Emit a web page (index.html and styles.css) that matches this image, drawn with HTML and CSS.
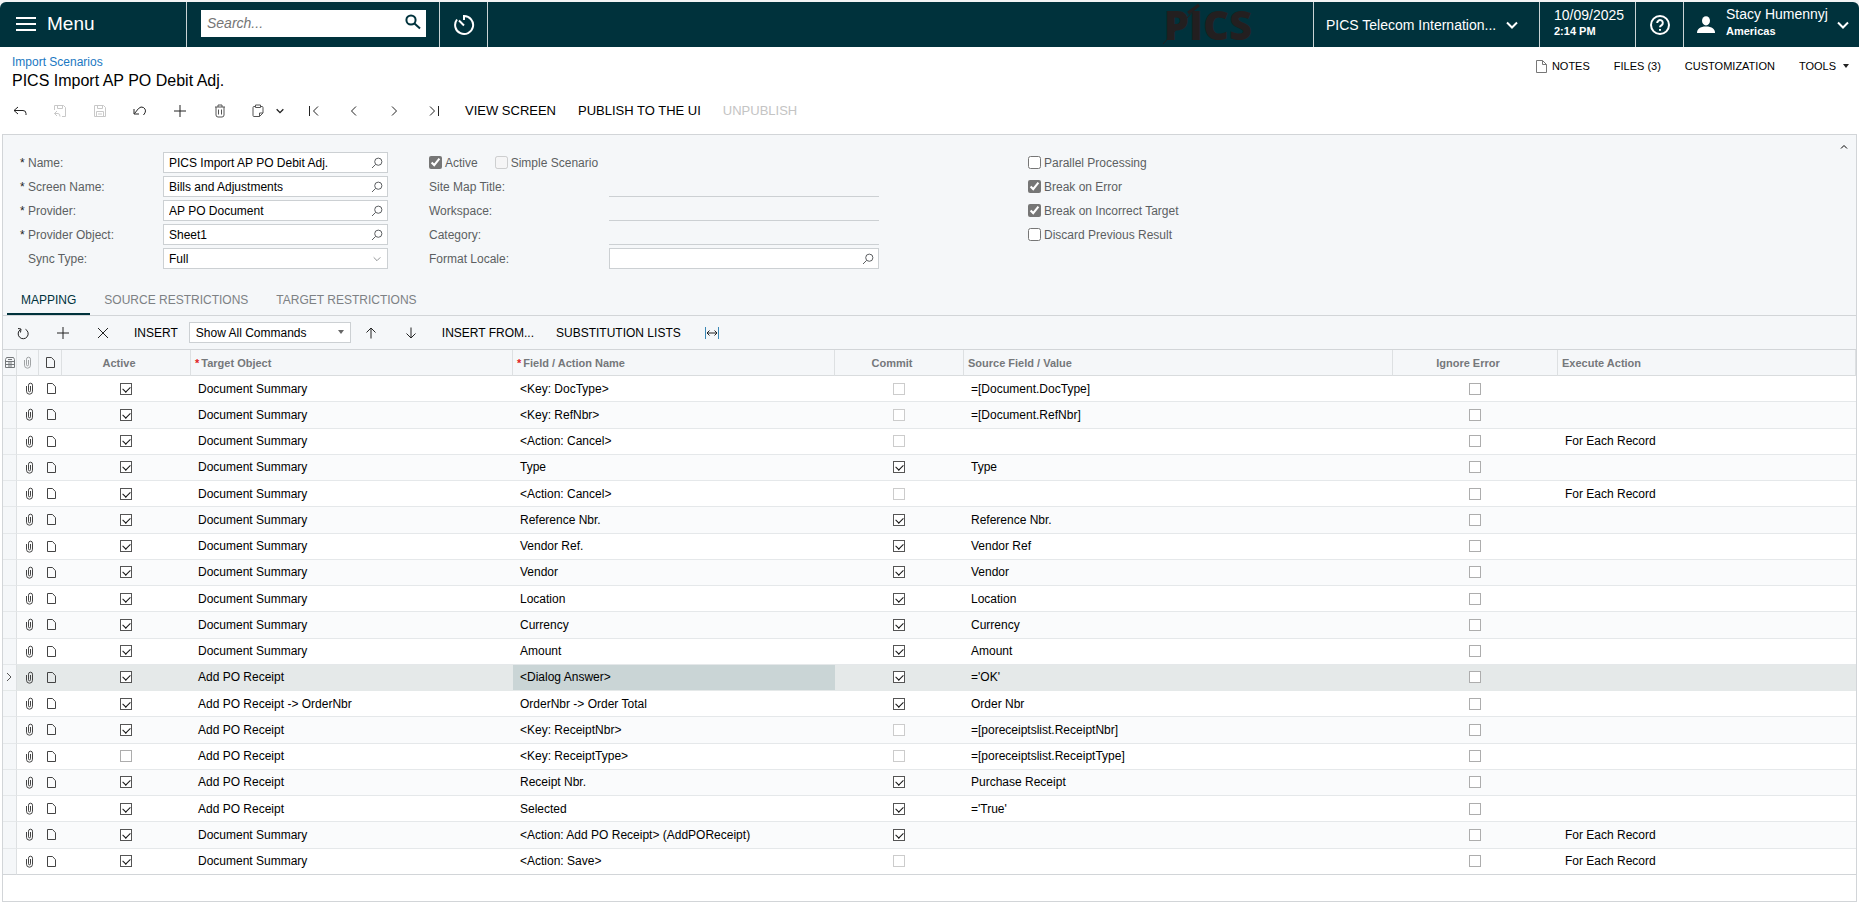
FILE: index.html
```html
<!DOCTYPE html>
<html lang="en">
<head>
  <meta charset="UTF-8">
  <title>Import Scenarios</title>
  <link rel="stylesheet" href="styles.css">
</head>
<body>

  <!-- shared icons -->
  <svg class="sprite" aria-hidden="true">
    <symbol id="lens" viewBox="0 0 12 12"><circle cx="7.3" cy="4.7" r="3.6"/><path d="M4.6 7.4L1 11"/></symbol>
    <symbol id="clip" viewBox="0 0 9 13"><path d="M1.5 4v5.2a3 3 0 0 0 6 0V3.2a2 2 0 0 0-4 0v5.6a1 1 0 0 0 2 0V4"/></symbol>
    <symbol id="page" viewBox="0 0 11 13"><path d="M1.5 1.5h5l3 3.2v6.8h-8z"/></symbol>
    <symbol id="down" viewBox="0 0 12 8"><path d="M1 1.5l5 5 5-5"/></symbol>
  </svg>

  <header class="topbar">
    <button class="menu">
      <svg width="20" height="14" viewBox="0 0 20 14"><path d="M0 1h20M0 7h20M0 13h20"/></svg>
      Menu
    </button>
    <div class="search">
      <input type="text" placeholder="Search..." aria-label="Search">
      <svg width="16" height="16" viewBox="0 0 16 16"><circle cx="6" cy="6" r="4.6"/><path d="M9.5 9.5L15 14.6"/></svg>
    </div>
    <button class="timer" aria-label="Business date">
      <svg width="22" height="22" viewBox="0 0 22 22"><path d="M11 6V2a9 9 0 1 1-7 3.500M11 11.5L6 6.500"/></svg>
    </button>
    <div class="logo">
      <span>PICS</span>
      <svg width="90" height="44" viewBox="0 0 90 44"><path d="M39 3L3 42"/><path class="nib" d="M39 3L28 11"/></svg>
    </div>
    <button class="company">
      <span>PICS Telecom Internation...</span>
      <svg class="arrow" width="12" height="8"><use href="#down"/></svg>
    </button>
    <button class="date"><span>10/09/2025</span><small>2:14 PM</small></button>
    <button class="help" aria-label="Help">
      <svg width="22" height="22" viewBox="0 0 22 22"><circle cx="11" cy="11" r="9"/><path d="M8.2 9a2.8 2.8 0 1 1 4.3 2.3c-1 .7-1.5 1-1.5 2M11 15v1.8"/></svg>
    </button>
    <button class="user">
      <svg class="person" width="18" height="18" viewBox="0 0 18 18"><ellipse cx="9" cy="4.8" rx="4" ry="4.6"/><path d="M0 17c0-4 3-6.500 9-6.500s9 2.500 9 6.500z"/></svg>
      <span class="who"><span>Stacy Humennyj</span><small>Americas</small></span>
      <svg class="arrow" width="12" height="8"><use href="#down"/></svg>
    </button>
  </header>

  <div class="heading">
    <div>
      <a href="#">Import Scenarios</a>
      <h1>PICS Import AP PO Debit Adj.</h1>
    </div>
    <nav>
      <button><svg width="11" height="13" viewBox="0 0 11 13"><path d="M.5 .5h6l4 4v8h-10zM6.500 .5v4h4"/></svg>NOTES</button>
      <button>FILES (3)</button>
      <button>CUSTOMIZATION</button>
      <button>TOOLS<i class="caret"></i></button>
    </nav>
  </div>

  <div class="toolbar">
    <button class="icon" aria-label="Back"><svg width="14" height="12" viewBox="0 0 14 12"><path d="M5 2L1 5.500 5 9M1 5.500h9q3 0 3 3V10"/></svg></button>
    <button class="icon" disabled aria-label="Save and close"><svg width="14" height="14" viewBox="0 0 14 14"><path d="M1.500 6V1.500h9l2 2v9H9M4.500 1.500v3h5v-3M4 7L1.500 9.500 4 12M1.500 9.500H5q2 0 2 3"/></svg></button>
    <button class="icon" disabled aria-label="Save"><svg width="14" height="14" viewBox="0 0 14 14"><path d="M1.500 1.500h9l2 2v9h-11zM4.500 1.500v3h5v-3M3.500 12.500v-5h7v5M5 10h4"/></svg></button>
    <button class="icon" aria-label="Undo"><svg width="14" height="12" viewBox="0 0 14 12"><path d="M1 4v5h5M1.500 8.500L5.500 3.500Q8 1 10.500 2.500q4 3 0 7.500"/></svg></button>
    <button class="icon" aria-label="Add"><svg width="14" height="14" viewBox="0 0 14 14"><path d="M7 1v12M1 7h12"/></svg></button>
    <button class="icon soft" aria-label="Delete"><svg width="12" height="14" viewBox="0 0 12 14"><path d="M1 3h10M4 3V1h4v2M2 3v8q0 2 2 2h4q2 0 2-2V3M4.500 5.500v5M7.500 5.500v5"/></svg></button>
    <button class="split soft" aria-label="Copy and paste">
      <svg width="14" height="14" viewBox="0 0 14 14"><path d="M4 2.500H3q-1 0-1 1v8q0 1 1 1h5.500l3.500-3.500v-5.500q0-1-1-1h-1M4.500 1h5v2.500h-5zM8.500 12.500V9H12"/></svg>
      <svg class="arrow" width="8" height="6"><use href="#down"/></svg>
    </button>
    <button class="icon" aria-label="First"><svg width="12" height="12" viewBox="0 0 12 12"><path d="M1.500 1v10M10 1.500L5.500 6l4.500 4.500"/></svg></button>
    <button class="icon" aria-label="Previous"><svg width="12" height="12" viewBox="0 0 12 12"><path d="M8 1.500L3.500 6 8 10.500"/></svg></button>
    <button class="icon" aria-label="Next"><svg width="12" height="12" viewBox="0 0 12 12"><path d="M4 1.500L8.500 6 4 10.500"/></svg></button>
    <button class="icon" aria-label="Last"><svg width="12" height="12" viewBox="0 0 12 12"><path d="M10.500 1v10M2 1.500L6.500 6 2 10.500"/></svg></button>
    <button>VIEW SCREEN</button>
    <button>PUBLISH TO THE UI</button>
    <button disabled>UNPUBLISH</button>
  </div>

  <main>
    <form class="summary">
      <div class="fields first">
        <label class="req" for="name">Name:</label>
        <span class="box"><input id="name" type="text" value="PICS Import AP PO Debit Adj."><svg width="12" height="12"><use href="#lens"/></svg></span>
        <label class="req" for="screen">Screen Name:</label>
        <span class="box"><input id="screen" type="text" value="Bills and Adjustments"><svg width="12" height="12"><use href="#lens"/></svg></span>
        <label class="req" for="provider">Provider:</label>
        <span class="box"><input id="provider" type="text" value="AP PO Document"><svg width="12" height="12"><use href="#lens"/></svg></span>
        <label class="req" for="object">Provider Object:</label>
        <span class="box"><input id="object" type="text" value="Sheet1"><svg width="12" height="12"><use href="#lens"/></svg></span>
        <label for="sync">Sync Type:</label>
        <span class="box"><select id="sync"><option>Full</option></select><svg width="8" height="6"><use href="#down"/></svg></span>
      </div>
      <div class="fields second">
        <div class="checks">
          <label><input type="checkbox" checked>Active</label>
          <label><input type="checkbox" disabled>Simple Scenario</label>
        </div>
        <label for="title">Site Map Title:</label>
        <input class="line" id="title" type="text" readonly>
        <label for="workspace">Workspace:</label>
        <input class="line" id="workspace" type="text" readonly>
        <label for="category">Category:</label>
        <input class="line" id="category" type="text" readonly>
        <label for="locale">Format Locale:</label>
        <span class="box"><input id="locale" type="text"><svg width="12" height="12"><use href="#lens"/></svg></span>
      </div>
      <div class="fields third">
        <label><input type="checkbox">Parallel Processing</label>
        <label><input type="checkbox" checked>Break on Error</label>
        <label><input type="checkbox" checked>Break on Incorrect Target</label>
        <label><input type="checkbox">Discard Previous Result</label>
      </div>
      <button class="collapse" type="button" aria-label="Collapse"><svg width="8" height="6" viewBox="0 0 8 6"><path d="M1 4.500L4 1.500l3 3"/></svg></button>
    </form>

    <div class="tabs">
      <button class="active">MAPPING</button>
      <button>SOURCE RESTRICTIONS</button>
      <button>TARGET RESTRICTIONS</button>
    </div>

    <div class="toolbar grid-toolbar">
      <button class="icon" aria-label="Refresh"><svg width="12" height="14" viewBox="0 0 12 14"><path d="M3.500 3.500A5 5 0 1 0 8.500 3.300M1 2.500l3 .5-.5 3.500"/></svg></button>
      <button class="icon" aria-label="Add row"><svg width="14" height="14" viewBox="0 0 14 14"><path d="M7 1v12M1 7h12"/></svg></button>
      <button class="icon" aria-label="Delete row"><svg width="12" height="12" viewBox="0 0 12 12"><path d="M1 1l10 10M11 1L1 11"/></svg></button>
      <button>INSERT</button>
      <span class="combo"><select aria-label="Commands"><option>Show All Commands</option></select><i class="caret"></i></span>
      <button class="icon" aria-label="Move up"><svg width="12" height="12" viewBox="0 0 12 12"><path d="M6 11.500V1M1.500 5.500L6 1l4.500 4.500"/></svg></button>
      <button class="icon" aria-label="Move down"><svg width="12" height="12" viewBox="0 0 12 12"><path d="M6 .5V11M1.500 6.500L6 11l4.500-4.500"/></svg></button>
      <button>INSERT FROM...</button>
      <button>SUBSTITUTION LISTS</button>
      <button class="icon" aria-label="Fit to screen"><svg width="14" height="12" viewBox="0 0 14 12"><path class="edge" d="M.5 0v12M13.500 0v12"/><path d="M2 6h10M4.500 3.500L2 6l2.500 2.500M9.500 3.500L12 6 9.500 8.500"/></svg></button>
    </div>

    <table>
      <colgroup>
        <col class="c-mark"><col class="c-file"><col class="c-note"><col class="c-check"><col class="c-name"><col class="c-name"><col class="c-check"><col class="c-source"><col class="c-ignore"><col>
      </colgroup>
      <thead>
        <tr>
          <th class="tool"><svg width="10" height="12" viewBox="0 0 10 12"><path d="M1.500 .5h7l1 2v8h-9v-8zM.5 4.500h9M.5 7.500h9M3 2.500h4M3 6h4M3 9h4"/></svg></th>
          <th class="tool pale"><svg width="9" height="13"><use href="#clip"/></svg></th>
          <th class="tool dark"><svg width="11" height="13"><use href="#page"/></svg></th>
          <th class="mid">Active</th>
          <th class="req">Target Object</th>
          <th class="req">Field / Action Name</th>
          <th class="mid">Commit</th>
          <th>Source Field / Value</th>
          <th class="mid">Ignore Error</th>
          <th>Execute Action</th>
        </tr>
      </thead>
      <tbody id="rows"></tbody>
    </table>
    <footer></footer>
  </main>

  <script src="script.js"></script>
</body>
</html>
```

FILE: styles.css
```css
* {
  box-sizing: border-box;
}

body {
  margin: 0;
  min-height: 100vh;
  padding: 2px 0 1px;
  display: flex;
  flex-direction: column;
  background: #fff;
  color: #000;
  font: 12px/16px "Liberation Sans", Arial, sans-serif;
}

button, input, select {
  font: inherit;
  color: inherit;
}

button {
  padding: 0;
  border: 0;
  background: none;
}

svg {
  display: block;
  flex: none;
  fill: none;
  stroke: currentColor;
}

.sprite {
  position: absolute;
  width: 0;
  height: 0;
}

/* top bar */
.topbar {
  display: flex;
  height: 45px;
  border-radius: 6px 6px 0 0;
  background: #00323c;
  color: #fff;
  box-shadow: 0 -2px 0 2px #f2f4f5;
  clip-path: inset(-2px 0 0 0);
}

.topbar button {
  display: flex;
  align-items: center;
  border-left: 1px solid #c8d3d5;
}

.topbar .menu {
  width: 186px;
  padding: 0 16px 2px;
  gap: 11px;
  border: 0;
  font-size: 19px;
}

.menu svg {
  stroke-width: 2;
}

.search {
  position: relative;
  width: 253px;
  padding: 8px 13px 10px 14px;
  border-left: 1px solid #c8d3d5;
}

.search input {
  width: 100%;
  height: 27px;
  padding: 0 30px 2px 6px;
  border: 0;
  background: #fff;
  color: #333;
  font-size: 14px;
}

.search input::placeholder {
  color: #757575;
  font-style: italic;
}

.search svg {
  position: absolute;
  top: 12px;
  right: 18px;
  color: #00323c;
  stroke-width: 2;
}

.topbar .timer {
  width: 49px;
  justify-content: center;
  border-right: 1px solid #c8d3d5;
}

.timer svg, .help svg, .arrow {
  stroke-width: 2;
}

.logo {
  position: relative;
  width: 92px;
  margin-left: auto;
  margin-right: 61px;
  display: flex;
  align-items: center;
  justify-content: flex-end;
  color: #231f20;
  font: 800 40px/45px "Open Sans", sans-serif;
}

.logo svg {
  position: absolute;
  left: 0;
  top: 0;
}

.logo .nib {
  stroke-width: 3;
}

.topbar .company {
  width: 226px;
  padding: 0 21px 0 12px;
  justify-content: space-between;
  font-size: 14px;
}

.topbar .date {
  width: 96px;
  padding: 0 0 3px 14px;
  flex-direction: column;
  align-items: flex-start;
  justify-content: center;
}

.date span, .who span {
  font-size: 14px;
}

.topbar small {
  display: block;
  font-size: 11px;
  font-weight: bold;
  line-height: 16px;
}

.topbar .help {
  width: 48px;
  justify-content: center;
}

.topbar .user {
  width: 176px;
  padding: 0 10px 0 13px;
  text-align: left;
}

.person {
  fill: #fff;
  stroke: none;
}

.who {
  margin: 0 auto 5px 11px;
}

/* page title */
.heading {
  display: flex;
  justify-content: space-between;
  padding: 7px 10px 0 12px;
}

.heading a {
  display: block;
  color: #1a78c2;
  text-decoration: none;
}

.heading h1 {
  margin: 0;
  font-size: 16px;
  font-weight: normal;
  line-height: 22px;
}

.heading nav {
  display: flex;
  align-items: center;
  gap: 24px;
  height: 24px;
  font-size: 11px;
}

.heading nav button {
  display: flex;
  align-items: center;
}

.heading nav svg {
  margin-right: 5px;
  color: #777;
}

.caret {
  border: 3px solid transparent;
  border-top: 4px solid #222;
  border-bottom: 0;
}

.heading .caret {
  margin-left: 7px;
}

/* toolbars */
.toolbar {
  display: flex;
  align-items: center;
  height: 42px;
  padding: 0 0 4px;
  font-size: 13px;
}

.toolbar button {
  padding: 0 11px;
}

.toolbar button:disabled {
  color: #c4c4c4;
}

.toolbar .icon {
  width: 40px;
  padding: 0;
  display: flex;
  justify-content: center;
  color: #222;
}

.toolbar .icon:disabled {
  color: #c8c8c8;
}

.toolbar .soft {
  color: #555;
}

.toolbar .split {
  width: 54px;
  padding: 0 10px 0 11px;
  display: flex;
  align-items: center;
  justify-content: space-between;
}

.split .arrow {
  color: #222;
}

.grid-toolbar {
  height: 34px;
  padding: 0;
  border-bottom: 1px solid #d2d5d8;
  font-size: 12px;
}

.toolbar .edge {
  stroke: #3a87b5;
}

.grid-toolbar button {
  padding: 0 11px;
}

.combo {
  position: relative;
  width: 162px;
}

.combo select {
  display: block;
  width: 100%;
  height: 21px;
  padding: 0 6px;
  border: 1px solid #ccd0d3;
  border-radius: 0;
  appearance: none;
  background: #fff;
}

.combo .caret {
  position: absolute;
  right: 7px;
  top: 8px;
  border-top-color: #666;
}

/* form */
main {
  flex: 1;
  display: flex;
  flex-direction: column;
  margin: 0 2px;
  border: 1px solid #d2d5d8;
  background: #f5f7f9;
}

.summary {
  position: relative;
  display: flex;
  padding: 17px 0 17px 17px;
  color: #5c5f62;
}

.fields {
  display: grid;
  grid-auto-rows: 21px;
  align-items: center;
  gap: 3px 0;
}

.first {
  grid-template-columns: 143px 225px;
  margin-right: 41px;
}

.second {
  grid-template-columns: 180px 270px;
  margin-right: 149px;
}

.first > label {
  padding-left: 8px;
}

.first > .req {
  padding-left: 0;
}

.first > .req::before {
  content: "*";
  display: inline-block;
  width: 8px;
  color: #222;
}

.box {
  position: relative;
  display: flex;
  align-items: center;
  height: 21px;
}

.box input, .box select {
  width: 100%;
  height: 21px;
  padding: 0 24px 0 5px;
  border: 1px solid #ccd0d3;
  border-radius: 0;
  appearance: none;
  background: #fff;
  color: #000;
}

.box svg {
  position: absolute;
  right: 5px;
}

.box select + svg {
  right: 7px;
}

.line {
  height: 21px;
  border: 0;
  border-bottom: 1px solid #ccd0d3;
  background: none;
}

.checks {
  grid-column: span 2;
  display: flex;
  gap: 17px;
}

.checks label, .third label {
  display: flex;
  align-items: center;
}

.summary input[type="checkbox"] {
  width: 13px;
  height: 13px;
  margin: 0 3px 0 0;
  accent-color: #767676;
}

.collapse {
  position: absolute;
  top: 9px;
  right: 8px;
  color: #000;
}

.tabs {
  display: flex;
  padding-left: 4px;
  border-bottom: 1px solid #d2d5d8;
}

.tabs button {
  height: 29px;
  padding: 0 14px;
  border-bottom: 2px solid transparent;
  color: #7d8184;
}

.tabs .active {
  border-color: #00323c;
  color: #00323c;
}

/* grid */
table {
  flex: 1;
  width: 100%;
  table-layout: fixed;
  border-collapse: separate;
  border-spacing: 0;
}

.c-mark { width: 14px; }
.c-file { width: 22px; }
.c-note { width: 23px; }
.c-check { width: 129px; }
.c-name { width: 322px; }
.c-source { width: 429px; }
.c-ignore { width: 165px; }

th {
  height: 26px;
  padding: 0 4px;
  border-right: 1px solid #dde0e2;
  border-bottom: 1px solid #d9dcde;
  color: #75787b;
  font-size: 11px;
  text-align: left;
}

th.mid {
  padding-right: 18px;
  text-align: center;
}

th.req::before {
  content: "*";
  color: #e02020;
  margin-right: 2px;
}

.tool {
  padding: 0;
}

.tool svg {
  margin: 0 auto;
}

th.pale {
  color: #a0a3a5;
}

th.dark {
  color: #444;
}

td {
  height: 26px;
  padding: 0 7px;
  border-bottom: 1px solid #e5e8ea;
  background: #fff;
}

td.tool {
  padding: 0 0 0 2px;
  color: #444;
}

td.mid {
  padding: 0 2px 0 0;
  text-align: center;
}

tr:nth-child(even) td {
  background: #fafbfc;
}

tbody tr td:first-child {
  padding: 0;
  border-right: 1px solid #dde0e2;
  background: #f5f7f9;
  color: #555;
}

tbody .selected td {
  border-color: #e5e9e9;
  background: #e5e9e9;
}

tbody .selected .current {
  background: #cad5d6;
}

tbody tr:last-child td {
  border-bottom-color: #d2d5d8;
}

td input {
  position: relative;
  display: block;
  width: 12px;
  height: 12px;
  margin: 0 auto;
  border: 1px solid #adadad;
  appearance: none;
  background: #fff;
}

td input:disabled {
  border-color: #cccccc;
}

td input:checked {
  border-color: #555;
}

td input:checked::before {
  content: "";
  position: absolute;
  left: 3px;
  top: 1px;
  width: 4px;
  height: 6px;
  border: solid #111;
  border-width: 0 1px 1px 0;
  transform: rotate(45deg);
}

footer {
  height: 26px;
  background: #fff;
}
```

FILE: script.js
```js
// active, target object, field / action, commit, source, execute action
const rows = [
  [1, 'Document Summary', '<Key: DocType>', 0, '=[Document.DocType]', ''],
  [1, 'Document Summary', '<Key: RefNbr>', 0, '=[Document.RefNbr]', ''],
  [1, 'Document Summary', '<Action: Cancel>', 0, '', 'For Each Record'],
  [1, 'Document Summary', 'Type', 1, 'Type', ''],
  [1, 'Document Summary', '<Action: Cancel>', 0, '', 'For Each Record'],
  [1, 'Document Summary', 'Reference Nbr.', 1, 'Reference Nbr.', ''],
  [1, 'Document Summary', 'Vendor Ref.', 1, 'Vendor Ref', ''],
  [1, 'Document Summary', 'Vendor', 1, 'Vendor', ''],
  [1, 'Document Summary', 'Location', 1, 'Location', ''],
  [1, 'Document Summary', 'Currency', 1, 'Currency', ''],
  [1, 'Document Summary', 'Amount', 1, 'Amount', ''],
  [1, 'Add PO Receipt', '<Dialog Answer>', 1, "='OK'", ''],
  [1, 'Add PO Receipt -> OrderNbr', 'OrderNbr -> Order Total', 1, 'Order Nbr', ''],
  [1, 'Add PO Receipt', '<Key: ReceiptNbr>', 0, '=[poreceiptslist.ReceiptNbr]', ''],
  [0, 'Add PO Receipt', '<Key: ReceiptType>', 0, '=[poreceiptslist.ReceiptType]', ''],
  [1, 'Add PO Receipt', 'Receipt Nbr.', 1, 'Purchase Receipt', ''],
  [1, 'Add PO Receipt', 'Selected', 1, "='True'", ''],
  [1, 'Document Summary', '<Action: Add PO Receipt> (AddPOReceipt)', 1, '', 'For Each Record'],
  [1, 'Document Summary', '<Action: Save>', 0, '', 'For Each Record']
];
const selected = 11;
const tbody = document.getElementById('rows');

function icon(id, width, height) {
  return `<svg width="${width}" height="${height}"><use href="#${id}"/></svg>`;
}

function check(label, on, disabled) {
  return `<input type="checkbox" aria-label="${label}"${on ? ' checked' : ''}${disabled ? ' disabled' : ''}>`;
}

function addCell(tr, className, text, html) {
  const td = tr.insertCell();
  td.className = className;
  if (html) {
    td.innerHTML = html;
  } else {
    td.textContent = text;
  }
  return td;
}

rows.forEach((row, i) => {
  const [active, target, field, commit, source, action] = row;
  const tr = tbody.insertRow();
  const marker = '<svg width="12" height="12" viewBox="0 0 12 12"><path d="M4 2l4 4-4 4"/></svg>';
  addCell(tr, '', '', i === selected ? marker : '');
  addCell(tr, 'tool', '', icon('clip', 9, 13));
  addCell(tr, 'tool', '', icon('page', 11, 13));
  addCell(tr, 'mid', '', check('Active', active));
  addCell(tr, '', target);
  const fieldCell = addCell(tr, '', field);
  addCell(tr, 'mid', '', check('Commit', commit, !commit));
  addCell(tr, '', source);
  addCell(tr, 'mid', '', check('Ignore Error', 0));
  addCell(tr, '', action);
  if (i === selected) {
    tr.className = 'selected';
    fieldCell.className = 'current';
  }
});
```
